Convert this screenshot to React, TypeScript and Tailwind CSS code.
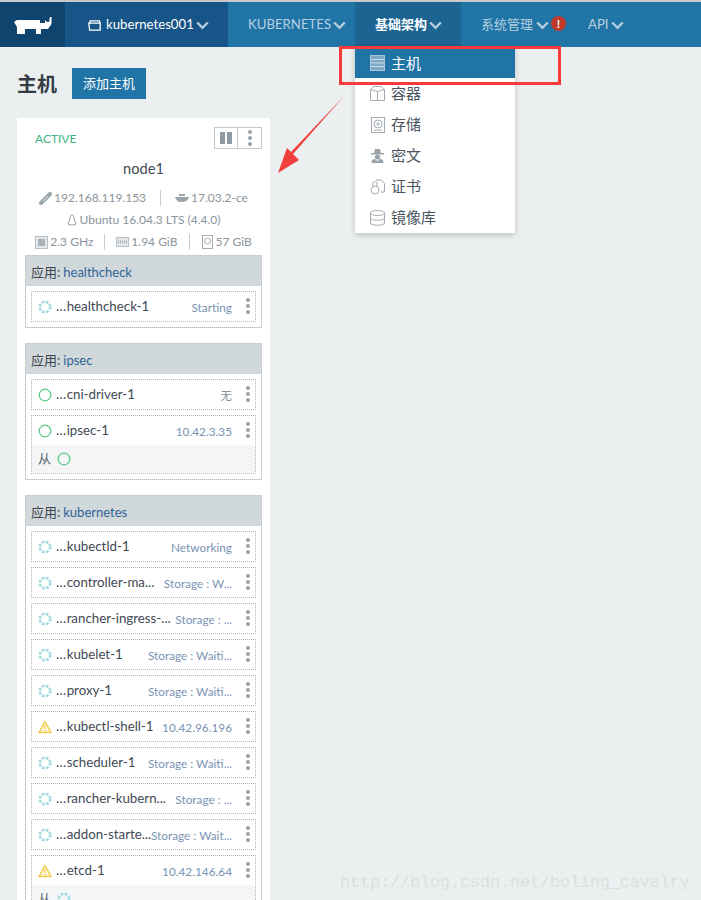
const font = { fontFamily: "Lato, 'Noto Sans CJK SC', sans-serif" };

const Chev = ({ className }: { className?: string }) => (
  <svg width="13" height="9" viewBox="0 0 13 9" fill="none" stroke="currentColor" strokeWidth="2.4" className={`shrink-0 ${className ?? ""}`}>
    <path d="M1.2 1.5 L6.5 6.8 L11.8 1.5" />
  </svg>
);

const Dots = () => (
  <div className="flex flex-col gap-[2px] w-[4px] shrink-0">
    <span className="w-[4px] h-[4px] rounded-full bg-[#98a2aa]" />
    <span className="w-[4px] h-[4px] rounded-full bg-[#98a2aa]" />
    <span className="w-[4px] h-[4px] rounded-full bg-[#98a2aa]" />
  </div>
);

const Spin = () => (
  <svg width="14" height="14" viewBox="0 0 14 14" className="shrink-0">
    <circle cx="7" cy="7" r="5.2" fill="none" stroke="#a3dbe2" strokeWidth="2.6" strokeDasharray="2.8 1.3" />
  </svg>
);

const Ok = () => (
  <svg width="14" height="14" viewBox="0 0 14 14" className="shrink-0">
    <circle cx="7" cy="7" r="5.8" fill="none" stroke="#5fc98a" strokeWidth="1.3" />
  </svg>
);

const Warn = () => (
  <svg width="14" height="14" viewBox="0 0 14 14" className="shrink-0">
    <path d="M7 1.5 L13 12.5 L1 12.5 Z" fill="#fdf6d8" stroke="#efc94c" strokeWidth="1.4" strokeLinejoin="round" />
    <path d="M7 5 V9 M7 10 V11.2" stroke="#efc94c" strokeWidth="1.2" />
  </svg>
);

type RowProps = {
  icon: "spin" | "ok" | "warn";
  name: string;
  detail: string;
  sub?: "ok" | "spin";
  gray?: boolean;
};

const StateIcon = ({ icon }: { icon: "spin" | "ok" | "warn" }) => {
  if (icon === "spin") return <Spin />;
  if (icon === "ok") return <Ok />;
  return <Warn />;
};

const Row = ({ icon, name, detail, sub, gray }: RowProps) => {
  return (
    <div className="border border-dotted border-[#b5b5b5] bg-white">
      <div className="h-[29px] flex items-center pl-[6px] pr-[5px]">
        <StateIcon icon={icon} />
        <span className="ml-[4px] flex-1 min-w-0 text-[13.3px] leading-[20px] -mt-[2px] text-[#3f4a55] whitespace-nowrap">
          <span className="tracking-[0.4px]">...</span>
          {name}
        </span>
        <span className={`shrink-0 mt-[2px] text-[11.8px] whitespace-nowrap ${gray ? "text-[#8a8f94]" : "text-[#7a94b4]"}`}>{detail}</span>
        <div className="ml-[14px] -mt-[2px]">
          <Dots />
        </div>
      </div>
      {sub && (
        <div className="h-[28px] bg-[#f3f5f6] flex items-center pl-[6px] gap-[6px] text-[13px] text-[#5a6570]">
          <span>从</span>
          <StateIcon icon={sub} />
        </div>
      )}
    </div>
  );
};

const Stack = ({ title, rows }: { title: string; rows: RowProps[] }) => {
  return (
    <div className="border border-[#cdcdcd] mb-[15px]">
      <div className="h-[30px] bg-[#d1d8db] pl-[5px] pt-[4px] flex items-center text-[13px] text-[#3a4550]">
        应用:<span className="ml-[3px] text-[#2f6496]">{title}</span>
      </div>
      <div className="flex flex-col gap-[5px] p-[5px]">
        {rows.map((r) => (
          <Row key={r.name} {...r} />
        ))}
      </div>
    </div>
  );
};

const HostIcon = () => (
  <svg width="15" height="16" viewBox="0 0 15 16">
    <rect x="0.5" y="0.5" width="14" height="15" fill="#7ea9c6" stroke="#a9c6d9" />
    <path d="M1 4.5H14M1 8H14M1 11.5H14" stroke="#c6dbe8" />
  </svg>
);

const BoxIcon = () => (
  <svg width="15" height="15" viewBox="0 0 15 15" fill="none" stroke="#a3acb3">
    <path d="M0.5 3.5 L4 0.5 H11 L14.5 3.5 V14.5 H0.5 Z M0.5 3.5 L7.5 5.5 L14.5 3.5 M7.5 5.5 V14.5" />
  </svg>
);

const DiskIcon = () => (
  <svg width="14" height="16" viewBox="0 0 14 16" fill="none" stroke="#a3acb3">
    <rect x="0.5" y="0.5" width="13" height="15" />
    <circle cx="7" cy="7" r="4" />
    <circle cx="7" cy="7" r="1.2" />
    <path d="M3 13H11" />
  </svg>
);

const SecretIcon = () => (
  <svg width="15" height="15" viewBox="0 0 15 15" fill="#9aa4ab">
    <path d="M4 5 L5 1 H10 L11 5 H14 V6.5 H1 V5 Z" />
    <circle cx="7.5" cy="9" r="2.6" />
    <path d="M1.5 15 C1.5 11 4 11 5 11 L7.5 13 L10 11 C11 11 13.5 11 13.5 15 Z" />
  </svg>
);

const CertIcon = () => (
  <svg width="15" height="16" viewBox="0 0 15 16" fill="none" stroke="#a3acb3">
    <path d="M6 1 H11 L14.5 4.5 V13 H11" />
    <circle cx="5" cy="11" r="4" />
    <path d="M3 7 V4 C3 2 7 2 7 4 V7" />
  </svg>
);

const RepoIcon = () => (
  <svg width="15" height="16" viewBox="0 0 15 16" fill="none" stroke="#a3acb3">
    <ellipse cx="7.5" cy="3" rx="7" ry="2.5" />
    <path d="M0.5 3 V13 C0.5 16 14.5 16 14.5 13 V3 M0.5 8 C0.5 11 14.5 11 14.5 8" />
  </svg>
);

const menuItems = [
  { label: "容器", icon: <BoxIcon /> },
  { label: "存储", icon: <DiskIcon /> },
  { label: "密文", icon: <SecretIcon /> },
  { label: "证书", icon: <CertIcon /> },
  { label: "镜像库", icon: <RepoIcon /> },
];

export default function App() {
  return (
    <div className="relative w-[701px] h-[900px] overflow-hidden bg-[#ebeff0]" style={font}>
      <div className="h-[2px] bg-[#c9c9c9]" />
      <header className="h-[45px] flex bg-[#2074a6] text-[#b5cfe0] whitespace-nowrap">
        <div className="w-[65px] bg-[#0f446f] flex items-center justify-center">
          <svg width="38" height="18" viewBox="0 0 38 18" fill="#fff" className="mt-[3px]">
            <path d="M0 5 L3 3 H26 V6 L31 6 V3 L33 5 H35 L36 0 L37.5 0 V7 L34 12 H27 V17 H22 V12 H11 V17 H3 V10 Z" />
          </svg>
        </div>
        <div className="w-[163px] bg-[#175488] flex items-center pl-[23px] text-white text-[13.2px]">
          <svg width="13" height="11" viewBox="0 0 13 11" fill="none" stroke="#fff" strokeWidth="1.3" className="mr-[5px] mt-[1px]">
            <path d="M0.8 3.2 H12.2 V10.2 H1.6 Z M1.6 3 L2.2 0.8 H11.5 L12 3" />
          </svg>
          kubernetes001
          <Chev className="ml-[2px] mt-[2px] text-[#b5cfe0]" />
        </div>
        <div className="ml-[20px] w-[107px] flex items-center text-[13.2px]">
          KUBERNETES
          <Chev className="ml-[2px] mt-[1px]" />
        </div>
        <div className="w-[106px] bg-[#1c6491] flex items-center pl-[20px] text-white font-bold text-[13px]">
          基础架构
          <Chev className="ml-[2px] mt-[1px] text-[#b5cfe0]" />
        </div>
        <div className="ml-[20px] flex items-center text-[13px]">
          系统管理
          <Chev className="ml-[3px] mt-[1px]" />
        </div>
        <div className="ml-[2px] w-[15px] h-[15px] rounded-full bg-[#c0392b] text-white text-[12px] font-bold flex items-center justify-center mt-[14px]">
          !
        </div>
        <div className="ml-[22px] flex items-center text-[13.2px]">
          API
          <Chev className="ml-[2px] mt-[1px]" />
        </div>
      </header>

      <main className="pl-[17px]">
        <div className="flex items-center h-[71px] pt-[2px]">
          <h1 className="text-[20px] font-bold text-[#333c45]">主机</h1>
          <button className="ml-[15px] w-[74px] h-[31px] bg-[#2074a6] text-white text-[13px]">添加主机</button>
        </div>

        <div className="w-[253px] bg-white px-[8px]">
          <div className="flex items-center justify-between pt-[9px] pl-[10px]">
            <span className="text-[12px] text-[#3fb37f] mt-[2px]">ACTIVE</span>
            <div className="flex h-[22px] border border-[#c8c8c8]">
              <div className="w-[23px] flex items-center justify-center gap-[2px] border-r border-[#c8c8c8]">
                <span className="w-[5px] h-[12px] bg-[#8f9aa3]" />
                <span className="w-[5px] h-[12px] bg-[#8f9aa3]" />
              </div>
              <div className="w-[23px] flex items-center justify-center">
                <Dots />
              </div>
            </div>
          </div>
          <div className="text-center text-[14.6px] text-[#3f4a55] mt-[10px] leading-[20px]">node1</div>
          <div className="flex justify-center items-center text-[12px] text-[#8a949c] mt-[10px] h-[18px]">
            <svg width="13" height="13" viewBox="0 0 13 13" className="mr-[2px]">
              <path d="M2 11 L11 2" stroke="#9aa4ab" strokeWidth="4" strokeLinecap="round" />
              <path d="M4 9 L9 4" stroke="#e4e8ea" strokeWidth="1" />
            </svg>
            192.168.119.153
            <span className="w-px h-[16px] bg-[#ccc] mx-[14px]" />
            <svg width="14" height="10" viewBox="0 0 14 10" fill="#9aa4ab" className="mr-[2px]">
              <path d="M0 4 H14 C13 8 10 9 6 9 C3 9 1 7 0 4 Z M4 1 H10 V3 H4 Z" />
            </svg>
            17.03.2-ce
          </div>
          <div className="flex justify-center items-center text-[12px] text-[#8a949c] mt-[4px] h-[18px]">
            <svg width="10" height="12" viewBox="0 0 10 12" fill="none" stroke="#9aa4ab" className="mr-[3px]">
              <path d="M5 1 C7 1 7 4 7 5 L9 10 L6 11 H4 L1 10 L3 5 C3 4 3 1 5 1 Z" />
            </svg>
            Ubuntu 16.04.3 LTS (4.4.0)
          </div>
          <div className="flex justify-center items-center text-[12px] text-[#8a949c] mt-[4px] h-[18px] mb-[4px]">
            <svg width="13" height="13" viewBox="0 0 13 13" className="mr-[2px]">
              <rect x="0.5" y="0.5" width="12" height="12" fill="#e4e8ea" stroke="#b7bfc5" />
              <rect x="3" y="3" width="7" height="7" fill="#a9b2b9" />
            </svg>
            2.3 GHz
            <span className="w-px h-[16px] bg-[#ccc] mx-[11px]" />
            <svg width="13" height="10" viewBox="0 0 13 10" className="mr-[2px]">
              <rect x="0.5" y="0.5" width="12" height="9" fill="#e4e8ea" stroke="#b7bfc5" />
              <path d="M2 5H11" stroke="#a9b2b9" strokeWidth="3" strokeDasharray="1 1" />
            </svg>
            1.94 GiB
            <span className="w-px h-[16px] bg-[#ccc] mx-[12px]" />
            <svg width="11" height="14" viewBox="0 0 11 14" fill="none" stroke="#a3acb3" className="mr-[2px]">
              <rect x="0.5" y="0.5" width="10" height="13" />
              <circle cx="5.5" cy="6" r="3" />
            </svg>
            57 GiB
          </div>

          <Stack title="healthcheck" rows={[{ icon: "spin", name: "healthcheck-1", detail: "Starting" }]} />
          <Stack
            title="ipsec"
            rows={[
              { icon: "ok", name: "cni-driver-1", detail: "无", gray: true },
              { icon: "ok", name: "ipsec-1", detail: "10.42.3.35", sub: "ok" },
            ]}
          />
          <Stack
            title="kubernetes"
            rows={[
              { icon: "spin", name: "kubectld-1", detail: "Networking" },
              { icon: "spin", name: "controller-ma...", detail: "Storage : W..." },
              { icon: "spin", name: "rancher-ingress-...", detail: "Storage : ..." },
              { icon: "spin", name: "kubelet-1", detail: "Storage : Waiti..." },
              { icon: "spin", name: "proxy-1", detail: "Storage : Waiti..." },
              { icon: "warn", name: "kubectl-shell-1", detail: "10.42.96.196" },
              { icon: "spin", name: "scheduler-1", detail: "Storage : Waiti..." },
              { icon: "spin", name: "rancher-kubern...", detail: "Storage : ..." },
              { icon: "spin", name: "addon-starte...", detail: "Storage : Wait..." },
              { icon: "warn", name: "etcd-1", detail: "10.42.146.64", sub: "spin" },
            ]}
          />
        </div>
      </main>

      {/* dropdown */}
      <div className="absolute left-[355px] top-[47px] w-[160px] h-[186px] bg-white shadow-[0_2px_6px_rgba(0,0,0,0.2)] text-[15px] text-[#4a5560]">
        <div className="h-[30px] mt-px bg-[#2074a6] text-white flex items-center pl-[15px] gap-[6px]">
          <HostIcon />
          主机
        </div>
        {menuItems.map((m) => (
          <div key={m.label} className="h-[31px] flex items-center pl-[15px] gap-[6px]">
            <span className="w-[15px] flex justify-center">{m.icon}</span>
            {m.label}
          </div>
        ))}
      </div>

      {/* annotations */}
      <div className="absolute left-[339px] top-[46px] w-[222px] h-[39px] border-[3px] border-[#f93a3a]" />
      <svg className="absolute left-[275px] top-[90px]" width="75" height="90" viewBox="0 0 75 90">
        <path d="M70 5 L18 64 L24 70 L3 83 L12 58 L16 62 Z" fill="#f0403c" />
      </svg>
      <div className="absolute left-[340px] top-[870px] text-[16.67px] text-[#dcdfdd] whitespace-nowrap" style={{ fontFamily: "'Liberation Mono', monospace" }}>
        http://blog.csdn.net/boling_cavalry
      </div>
    </div>
  );
}
